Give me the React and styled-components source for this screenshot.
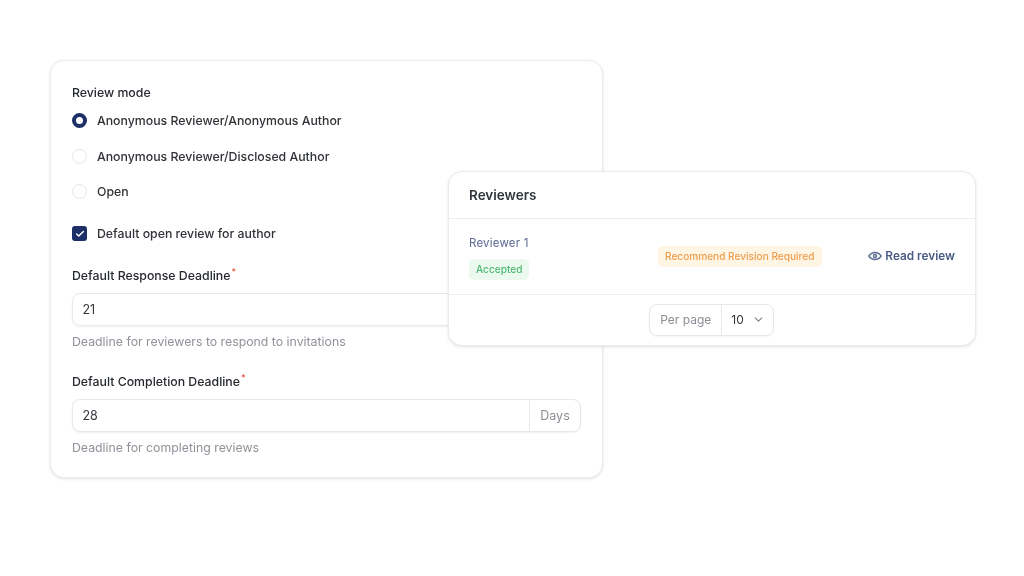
import React from 'react';
import styled, { createGlobalStyle } from 'styled-components';
import { ChevronDown, Check } from 'lucide-react';

const Global = createGlobalStyle`
  html, body { margin: 0; padding: 0; background: #fff; }
  body { font-family: Inter, "Liberation Sans", sans-serif; color: #2f3237; }
`;

const Stage = styled.main`
  position: relative;
  width: 1024px;
  height: 576px;
  padding: 60px 0 0 50px;
  box-sizing: border-box;
  overflow: hidden;
  filter: blur(0.35px);
`;

const Card = styled.section`
  background: #fff;
  border: 1px solid #eaebed;
  border-radius: 14px;
  box-shadow: 0 1px 3px rgba(20, 25, 40, 0.12);
  box-sizing: border-box;
`;

const SettingsCard = styled(Card)`
  width: 553px;
  height: 418px;
  padding: 24px 21px 0;
  display: flex;
  flex-direction: column;
`;

const Label = styled.div`
  font-size: 12.3px;
  line-height: 16px;
  font-weight: 550;
  color: #26292e;
`;

const Req = styled.sup`
  color: #e5533d;
  font-size: 9px;
  line-height: 0;
  margin-left: 1px;
`;

const RadioList = styled.div`
  display: flex;
  flex-direction: column;
  gap: 16.5px;
  margin-top: 10px;
`;

const Option = styled.div`
  display: flex;
  align-items: center;
  gap: 10px;
  height: 19px;
  font-size: 12.3px;
  font-weight: 550;
  color: #2f3237;
`;

const Radio = styled.span`
  width: 15px;
  height: 15px;
  border-radius: 50%;
  flex: none;
  box-sizing: border-box;
  background: #fff;
  border: ${p => (p.$on ? '4.5px solid #1c2f66' : '1px solid #e6e7ea')};
`;

const CheckBox = styled.span`
  width: 15px;
  height: 15px;
  border-radius: 3px;
  flex: none;
  background: #1c2f66;
  color: #fff;
  display: grid;
  place-items: center;
`;

const CheckRow = styled(Option)`
  margin-top: 23px;
`;

const Field = styled.div`
  margin-top: ${p => p.$top}px;
`;

const InputBox = styled.div`
  display: flex;
  height: 33px;
  margin-top: 9px;
  border: 1px solid #e7e8eb;
  border-radius: 8px;
  box-shadow: 0 1px 2px rgba(20, 25, 40, 0.06);
  box-sizing: border-box;
  font-size: 12.5px;
  color: #33363b;
`;

const Value = styled.div`
  flex: 1;
  display: flex;
  align-items: center;
  padding-left: 9.5px;
`;

const Addon = styled.div`
  width: 50px;
  display: flex;
  align-items: center;
  justify-content: center;
  border-left: 1px solid #e7e8eb;
  color: #8b8e95;
`;

const Hint = styled.div`
  margin-top: 8px;
  font-size: 12.3px;
  line-height: 16px;
  color: #8f9299;
`;

const ReviewersCard = styled(Card)`
  position: absolute;
  left: 447.5px;
  top: 170.5px;
  width: 528.5px;
  height: 175px;
  display: flex;
  flex-direction: column;
`;

const CardHead = styled.header`
  height: 46px;
  padding-left: 20.5px;
  display: flex;
  align-items: center;
  font-size: 13.5px;
  font-weight: 600;
  color: #33363b;
  border-bottom: 1px solid #eceded;
`;

const ReviewerRow = styled.div`
  height: 75px;
  padding: 0 20px 0 20.5px;
  display: grid;
  grid-template-columns: 189px 1fr auto;
  align-items: center;
  border-bottom: 1px solid #eceded;
`;

const ReviewerInfo = styled.div`
  display: flex;
  flex-direction: column;
  align-items: flex-start;
  gap: 8px;
  padding-top: 2px;
`;

const ReviewerName = styled.div`
  font-size: 11.5px;
  line-height: 16px;
  letter-spacing: 0.2px;
  color: #5b6a93;
`;

const Badge = styled.span`
  display: inline-flex;
  align-items: center;
  height: 21px;
  padding: 0 7px;
  border-radius: 5px;
  font-size: 10.1px;
  font-weight: 500;
  background: ${p => (p.$tone === 'green' ? '#ebf9ef' : '#fef5e5')};
  color: ${p => (p.$tone === 'green' ? '#4fb872' : '#ee9d4c')};
  justify-self: start;
`;

const ReadLink = styled.a`
  display: flex;
  align-items: center;
  gap: 3px;
  font-size: 11.8px;
  font-weight: 600;
  color: #4a5a85;
`;

const Pager = styled.footer`
  flex: 1;
  display: flex;
  align-items: center;
  justify-content: center;
`;

const PerPage = styled.div`
  display: flex;
  height: 32px;
  border: 1px solid #e7e8eb;
  border-radius: 8px;
  box-sizing: border-box;
  font-size: 12px;
  box-shadow: 0 1px 2px rgba(20, 25, 40, 0.05);
`;

const PerLabel = styled.div`
  width: 71px;
  display: flex;
  align-items: center;
  justify-content: center;
  color: #8b8e95;
  border-right: 1px solid #e7e8eb;
`;

const PerSelect = styled.div`
  width: 51px;
  display: flex;
  align-items: center;
  gap: 8px;
  padding-left: 9px;
  box-sizing: border-box;
  color: #33363b;
`;

const EyeIcon = () => (
  <svg width="14" height="14" viewBox="0 0 24 24" fill="none" stroke="#5b6a93" strokeWidth="2.4" strokeLinecap="round" strokeLinejoin="round">
    <path d="M1.5 12S5.5 6 12 6s10.5 6 10.5 6-4 6-10.5 6S1.5 12 1.5 12z" />
    <circle cx="12" cy="12" r="2.6" />
  </svg>
);

const radios = [
  { id: 1, label: 'Anonymous Reviewer/Anonymous Author', on: true },
  { id: 2, label: 'Anonymous Reviewer/Disclosed Author' },
  { id: 3, label: 'Open' },
];

export default function App() {
  return (
    <Stage>
      <Global />
      <SettingsCard>
        <Label>Review mode</Label>
        <RadioList>
          {radios.map(r => (
            <Option key={r.id}>
              <Radio $on={r.on} />
              {r.label}
            </Option>
          ))}
        </RadioList>
        <CheckRow>
          <CheckBox><Check size={10} strokeWidth={3.5} /></CheckBox>
          Default open review for author
        </CheckRow>
        <Field $top={25}>
          <Label>Default Response Deadline<Req>*</Req></Label>
          <InputBox>
            <Value>21</Value>
            <Addon>Days</Addon>
          </InputBox>
          <Hint>Deadline for reviewers to respond to invitations</Hint>
        </Field>
        <Field $top={24}>
          <Label>Default Completion Deadline<Req>*</Req></Label>
          <InputBox>
            <Value>28</Value>
            <Addon>Days</Addon>
          </InputBox>
          <Hint>Deadline for completing reviews</Hint>
        </Field>
      </SettingsCard>
      <ReviewersCard>
        <CardHead>Reviewers</CardHead>
        <ReviewerRow>
          <ReviewerInfo>
            <ReviewerName>Reviewer 1</ReviewerName>
            <Badge $tone="green">Accepted</Badge>
          </ReviewerInfo>
          <Badge $tone="orange">Recommend Revision Required</Badge>
          <ReadLink><EyeIcon />Read review</ReadLink>
        </ReviewerRow>
        <Pager>
          <PerPage>
            <PerLabel>Per page</PerLabel>
            <PerSelect>10<ChevronDown size={13} color="#7d8087" /></PerSelect>
          </PerPage>
        </Pager>
      </ReviewersCard>
    </Stage>
  );
}
